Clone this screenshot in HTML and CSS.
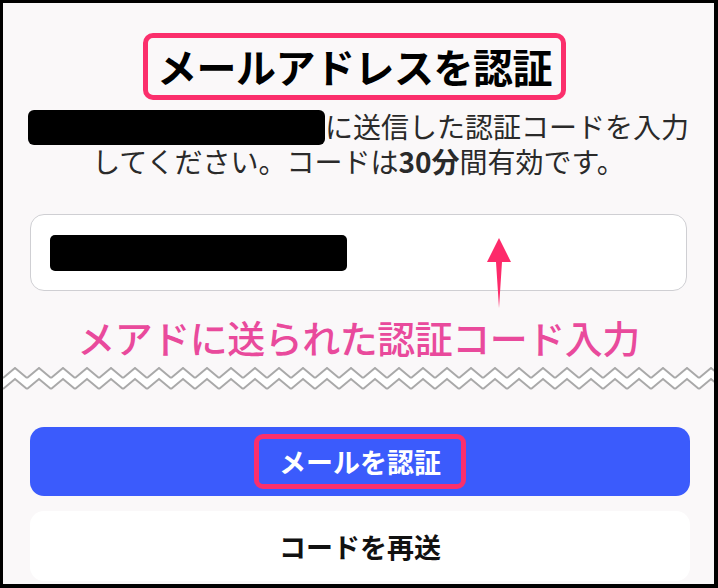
FILE: index.html
```html
<!DOCTYPE html>
<html lang="ja">
<head>
    <meta charset="UTF-8">
    <meta name="viewport" content="width=device-width, initial-scale=1.0">
    <title>メールアドレスを認証</title>
    <link rel="stylesheet" href="styles.css">
</head>
<body>
    <div class="frame">
        <div class="title-wrap">
            <h1 class="title mark">メールアドレスを認証</h1>
        </div>

        <p class="desc">
            <span class="line"><span class="redact redact-mail"></span>に送信した認証コードを入力</span>
            <span class="line">してください。コードは<strong>30分</strong>間有効です。</span>
        </p>

        <div class="code-input">
            <span class="redact redact-code"></span>
        </div>

        <p class="note">メアドに送られた認証コード入力</p>

        <!-- 画面の省略（ギザギザ） -->
        <svg class="zigzag" width="100%" height="25">
            <defs>
                <pattern id="zz" width="24" height="25" patternUnits="userSpaceOnUse">
                    <polygon points="0,11 12,1 24,11 24,22 12,12 0,22" fill="#ffffff"/>
                    <polyline points="0,11 12,1 24,11" fill="none" stroke="#a9a9a9" stroke-width="2"/>
                    <polyline points="0,22 12,12 24,22" fill="none" stroke="#a9a9a9" stroke-width="2"/>
                </pattern>
            </defs>
            <rect width="100%" height="25" fill="url(#zz)"/>
        </svg>

        <button class="btn btn-primary"><span class="mark btn-mark">メールを認証</span></button>
        <button class="btn btn-plain">コードを再送</button>

        <svg class="arrow" width="30" height="72" viewBox="0 0 30 72">
            <polygon points="15,0 27,24 18,24 15,70 12,24 3,24" fill="#fd2a6a"/>
        </svg>
    </div>
</body>
</html>
```

FILE: styles.css
```css
* {
    box-sizing: border-box;
}
body {
    margin: 0;
    font-family: "Noto Sans CJK JP", "Noto Sans", sans-serif;
    color: #222;
}
.frame {
    position: relative;
    width: 718px;
    height: 588px;
    border: 3px solid #000;
    border-right-width: 4px;
    border-bottom-width: 4px;
    background: #faf8f9;
    padding: 30px 25px 0 25px;
    overflow: hidden;
}
.title-wrap {
    text-align: center;
}
.mark {
    display: inline-block;
    border: 5px solid #fb2f6c;
    border-radius: 10px;
}
.title {
    margin: 0 8px 0 0;
    padding: 0 9px;
    height: 67px;
    line-height: 56px;
    font-size: 40px;
    font-weight: 700;
    color: #000;
    letter-spacing: -0.5px;
}
.desc {
    margin: 10px 0 0 0;
    font-size: 28px;
    line-height: 33px;
    text-align: center;
    color: #2a2a2a;
}
.desc .line {
    display: block;
}
.desc strong {
    font-weight: 700;
}
.redact {
    display: inline-block;
    background: #000;
}
.redact-mail {
    width: 297px;
    height: 35px;
    border-radius: 6px;
    vertical-align: -7px;
}
.code-input {
    margin: 36px 2px 0 2px;
    height: 77px;
    background: #fff;
    border: 1px solid #cfcfd3;
    border-radius: 14px;
    padding: 20px 0 0 19px;
}
.redact-code {
    width: 297px;
    height: 36px;
    border-radius: 5px;
}
.note {
    margin: 23px 0 0 0;
    font-size: 38px;
    line-height: 46px;
    font-weight: 500;
    text-align: center;
    color: #e94a9c;
    letter-spacing: -0.5px;
}
.zigzag {
    display: block;
    margin: 7px -25px 0 -25px;
    width: 718px;
}
.btn {
    display: flex;
    align-items: center;
    justify-content: center;
    width: 660px;
    margin: 0 2px;
    border: none;
    border-radius: 14px;
    font-family: inherit;
    font-size: 27px;
    font-weight: 700;
}
.btn-primary {
    margin-top: 35px;
    height: 69px;
    background: #3b5bfc;
    color: #fff;
}
.btn-mark {
    padding: 0 20px;
    height: 55px;
    line-height: 45px;
    border-radius: 9px;
}
.btn-plain {
    margin-top: 15px;
    height: 70px;
    background: #fff;
    color: #111;
}
.arrow {
    position: absolute;
    left: 481px;
    top: 235px;
}
```
